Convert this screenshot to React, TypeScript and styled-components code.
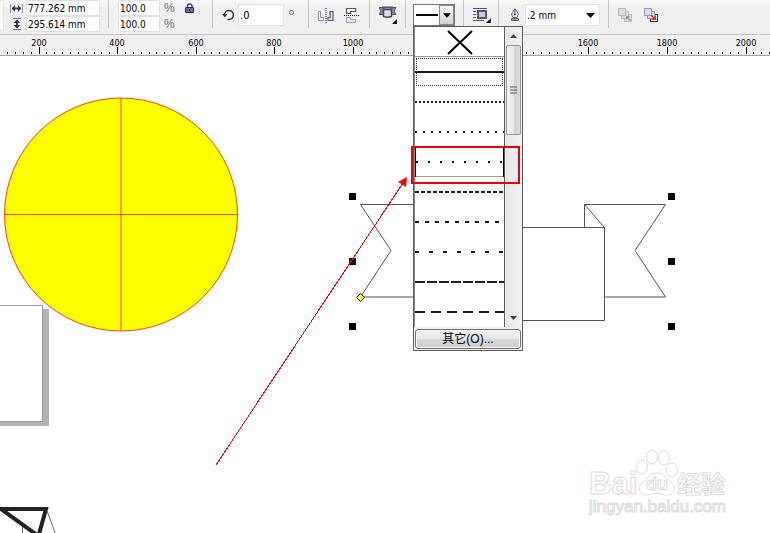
import React, { useEffect, useState } from 'react';
import styled, { createGlobalStyle } from 'styled-components';

const GlobalStyle = createGlobalStyle`
  * { box-sizing: border-box; }
  html, body { margin: 0; padding: 0; background: #fff; }
  body, button, input { font-family: "DejaVu Sans Condensed", "Noto Sans CJK SC", sans-serif; font-size: 10px; color: #000; }
  svg { display: block; flex: none; }
`;

const Page = styled.div`
  display: flex;
  flex-direction: column;
  height: 100vh;
  overflow: hidden;
`;

const Toolbar = styled.header`
  position: relative;
  z-index: 2;
  display: flex;
  height: 35px;
  flex: none;
  background: linear-gradient(#f8f8f8, #f0f0f0 8px);
  border-bottom: 1px solid #c4c4c4;
`;

const Section = styled.div<{ $width: number; $gap?: number; $start?: number }>`
  display: flex;
  align-items: center;
  flex: none;
  height: 30px;
  width: ${(p) => p.$width}px;
  gap: ${(p) => p.$gap ?? 0}px;
  padding-left: ${(p) => p.$start ?? 9}px;
`;

const Divider = styled.div`
  flex: none;
  width: 1px;
  height: 28px;
  background: #c3c3c3;
`;

const Pair = styled.div`
  display: grid;
  grid-template-rows: 16px 16px;
  align-self: flex-start;
`;

const PairRow = styled.label<{ $gap: number }>`
  display: flex;
  align-items: center;
  gap: ${(p) => p.$gap}px;
`;

const Field = styled.input<{ $width: number; $tall?: boolean }>`
  width: ${(p) => p.$width}px;
  height: ${(p) => (p.$tall ? 22 : 16)}px;
  padding: 0 1px;
  border: 1px solid #dde1e8;
  border-radius: 2px;
  background: #fff;
  outline: none;
  font-size: ${(p) => (p.$tall ? 11 : 10)}px;
`;

const FieldEdge = styled.div`
  width: 4px;
  height: 31px;
  align-self: flex-start;
  background: #fff;
  border: 1px solid #dde1e8;
  border-left: 0;
  border-radius: 0 2px 2px 0;
`;

const Unit = styled.span`
  font-family: "Liberation Sans", sans-serif;
  font-size: 12px;
  line-height: 16px;
  color: #66666e;
`;

const Degree = styled.span`
  width: 5px;
  height: 5px;
  margin: 0 0 6px 2px;
  border: 1px solid #77777f;
  border-radius: 50%;
`;

const IconButton = styled.button`
  display: flex;
  align-items: center;
  padding: 0;
  border: 0;
  background: none;
`;

const StylePicker = styled.div`
  position: relative;
  flex: none;
`;

const StyleButton = styled.button`
  display: flex;
  align-items: center;
  width: 42px;
  height: 22px;
  padding: 0 0 0 2px;
  border: 1px solid #777;
  background: #fff;
`;

const StylePreview = styled.span`
  flex: 1;
  height: 2px;
  margin-right: 1px;
  background: #000;
`;

const StyleCaret = styled.span`
  display: flex;
  align-items: center;
  justify-content: center;
  width: 15px;
  height: 20px;
  border: 1px solid #888;
  background: linear-gradient(#f6f6f6, #d4d4d4);
`;

const WidthPicker = styled.div`
  display: flex;
  align-items: center;
  width: 75px;
  height: 22px;
  padding-right: 4px;
  border: 1px solid #dde1e8;
  border-radius: 2px;
  background: #fff;
`;

const WidthInput = styled.input`
  flex: 1;
  min-width: 0;
  padding: 0 1px;
  border: 0;
  outline: none;
  background: none;
  font-size: 10px;
`;

const Menu = styled.div`
  position: absolute;
  top: 22px;
  left: 0;
  width: 110px;
  border: 1px solid #5c5c5c;
  background: #f0f0f0;
`;

const MenuBody = styled.div`
  display: flex;
`;

const StyleList = styled.div`
  flex: 1;
  border-left: 1px solid #8a8a8a;
  border-right: 1px solid #5c5c5c;
  background: #fff;
`;

const StyleRow = styled.button<{ $first?: boolean; $selected?: boolean; $hot?: boolean }>`
  position: relative;
  display: flex;
  align-items: center;
  justify-content: center;
  width: 100%;
  height: 30px;
  padding: 0;
  border: 0 solid #000;
  border-width: ${(p) => (p.$hot ? '0 1px' : '0')};
  box-shadow: ${(p) => (p.$first || p.$hot ? 'inset 0 -1px #999' : 'none')};
  outline: ${(p) => (p.$selected ? '1px dotted #333' : 'none')};
  outline-offset: -2px;
  background: #fff;
`;

const Highlight = styled.span`
  position: absolute;
  z-index: 1;
  top: -1px;
  left: -5px;
  width: 109px;
  height: 38px;
  border: 2px solid #f00000;
  pointer-events: none;
`;

const ScrollBar = styled.div`
  display: flex;
  flex-direction: column;
  align-items: center;
  width: 17px;
  background: linear-gradient(90deg, #e8e8e8, #f2f2f2);
`;

const ScrollArrow = styled.button`
  display: flex;
  align-items: center;
  justify-content: center;
  width: 16px;
  height: 18px;
  padding: 0;
  border: 0;
  background: none;
`;

const Thumb = styled.div`
  display: grid;
  place-items: center;
  width: 15px;
  height: 90px;
  margin-bottom: auto;
  border: 1px solid #979797;
  border-radius: 2px;
  background: linear-gradient(90deg, #f5f5f5, #e6e6e8 50%, #cfcfd2 60%, #dedee0);
`;

const OtherButton = styled.button`
  display: block;
  width: 106px;
  height: 20px;
  margin: 2px 1px 1px;
  padding: 0;
  border: 1px solid #707070;
  border-radius: 3px;
  box-shadow: inset 0 0 0 1px #f8f8f8;
  background: linear-gradient(#f2f2f2, #e6e6e6 50%, #d8d8d8 51%, #cfcfcf);
  font-family: "Liberation Sans", "Noto Sans CJK SC", sans-serif;
  font-size: 12px;
  line-height: 16px;
`;

const RulerBar = styled.div`
  flex: none;
  height: 21px;
  overflow: hidden;
  background: #f0f0f0;
  border-bottom: 1px solid #a0a0a0;
`;

const Canvas = styled.main`
  position: relative;
  flex: 1;
  min-height: 0;
  overflow: hidden;
  background: #fff;
`;

const Watermark = styled.div`
  position: absolute;
  right: 40px;
  bottom: 12px;
`;

const Caret = ({ size = 9 }: { size?: number }) => (
  <svg width={size} height="5" viewBox="0 0 9 5"><path d="M0 0h9L4.500 5z" fill="#000" /></svg>
);

const WidthIcon = () => (
  <svg width="13" height="9" viewBox="0 0 13 9" fill="none" stroke="#44445a">
    <path d="M.5 0v9M12.500 0v9" stroke="#8e8ea4" />
    <path d="M2 4.500h9" strokeWidth="2" />
    <path d="M5 1 2 4.500l3 3.500zM8 1l3 3.500-3 3.500z" fill="#33334a" stroke="none" />
  </svg>
);

const HeightIcon = () => (
  <svg width="13" height="12" viewBox="0 0 13 12" fill="none" stroke="#44445a">
    <path d="M3 .5h8M3 11.500h8" stroke="#77778a" />
    <path d="M7 2v8" strokeWidth="2" />
    <path d="M3.500 5 7 1.500 10.500 5zM3.500 7 7 10.500 10.500 7z" fill="#33334a" stroke="none" />
  </svg>
);

const LockIcon = () => (
  <svg width="10" height="11" viewBox="0 0 10 11">
    <path d="M2.500 5V2.500Q2.500 1 4.500 1T7 2.500V5" fill="none" stroke="#3b3b58" strokeWidth="1.400" />
    <rect x=".5" y="4.500" width="8" height="5" rx=".5" fill="#6e6ea6" stroke="#26264a" />
    <path d="M4.500 6v2" stroke="#15153a" />
  </svg>
);

const RotateIcon = () => (
  <svg width="13" height="12" viewBox="0 0 13 12">
    <path d="M2.500 6V5A4.500 4.500 0 1 1 7 10.500H5.500" fill="none" stroke="#33334a" strokeWidth="1.600" />
    <path d="M0 5h5.500L2.800 8.500z" fill="#33334a" />
  </svg>
);

const MirrorH = () => (
  <svg width="16" height="15" viewBox="0 0 16 15" fill="none">
    <path d="M.5 3.500h2v6h3v3h-5z" fill="#fff" stroke="#8a8aa2" />
    <path d="M15 3.500h-3v6h-2v3h5z" fill="#e4e4f2" stroke="#55556f" strokeWidth="1.200" />
    <path d="M8 0v15" stroke="#111" strokeDasharray="1 1" />
  </svg>
);

const MirrorV = () => (
  <svg width="15" height="15" viewBox="0 0 15 15" fill="none">
    <path d="M2.500.5h9v3h-5v2h-4z" fill="#fff" stroke="#55556f" strokeWidth="1.200" />
    <path d="M2.500 9.500h4v2h5v3h-9z" fill="#eee" stroke="#9a9ab4" />
    <path d="M0 7.500h15" stroke="#111" strokeDasharray="1 1" />
  </svg>
);

const RibbonIcon = () => (
  <svg width="18" height="18" viewBox="0 0 18 18">
    <path d="M0 1.500h5v7H0l2-3.500zM17 1.500h-5v7h5l-2-3.500z" fill="#8a8aa6" stroke="#55556f" />
    <path d="M4.500 3.500h8v7q-4 1.500-8 0z" fill="#dedeed" stroke="#44445a" strokeWidth="1.500" />
    <path d="M3 1.500h11" stroke="#55556f" strokeWidth="2" />
    <path d="M18 13v5h-5z" fill="#000" />
  </svg>
);

const WrapIcon = () => (
  <svg width="18" height="17" viewBox="0 0 18 17">
    <path d="M0 1.500h14M0 4.500h3M0 7.500h3M0 10.500h3M0 13.500h11" stroke="#55556a" />
    <rect x="5" y="4" width="8" height="7" fill="#c9c9df" stroke="#55556f" strokeWidth="2" />
    <path d="M18 11v5h-5z" fill="#000" />
  </svg>
);

const PenIcon = () => (
  <svg width="10" height="14" viewBox="0 0 10 14">
    <path d="M5 .7 1.500 6 3 9.500h4L8.500 6z" fill="#eee" stroke="#66667d" />
    <path d="M5 1v6" stroke="#55556a" />
    <circle cx="5" cy="6.500" r="1" fill="#44445a" />
    <path d="M1.500 10.500h7v2h-7z" fill="#aaaabd" stroke="#55556a" />
  </svg>
);

const OrderIcon = ({ active }: { active?: boolean }) => (
  <svg width="15" height="15" viewBox="0 0 15 15">
    <rect x="6.500" y="6.500" width="7" height="7" fill={active ? '#fff' : '#ddd'} stroke={active ? '#33334a' : '#bbb'} />
    <rect x="3.500" y="3.500" width="7" height="7" fill={active ? '#d8d8ee' : '#ddd'} stroke={active ? '#9999bb' : '#bbb'} />
    <rect x=".5" y=".5" width="7" height="7" fill={active ? '#dcdcf2' : '#dedede'} stroke={active ? '#9999bb' : '#b8b8b8'} />
    {active
      ? <path d="M7.500 6.500 10 9l2-2v5H7l2-2-2.500-2.500z" fill="#f03010" />
      : <path d="M8 8h4l-1.500 1.500L13 12l-1 1-2.500-2.500L8 12z" fill="#999" />}
  </svg>
);

const dashStyles = ['', '2 2', '2 6', '2 10', '4 2', '4 6', '4 10', '10 2', '10 6'];

const LineStyleMenu = () => (
  <Menu>
    <MenuBody>
      <StyleList role="listbox" aria-label="Line style">
        <StyleRow $first role="option" aria-selected={false} aria-label="None">
          <svg width="26" height="26" viewBox="0 0 26 26"><path d="M1 2l24 23M25 2 1 25" stroke="#000" strokeWidth="2" /></svg>
        </StyleRow>
        {dashStyles.map((dash, i) => (
          <StyleRow key={i} $selected={i === 0} $hot={i === 3} role="option" aria-selected={i === 0} aria-label={`Dash ${dash || 'solid'}`}>
            <svg width="100%" height="2"><path d="M0 1h400" stroke="#1a1a1a" strokeWidth="2" strokeDasharray={dash || undefined} /></svg>
            {i === 3 && <Highlight />}
          </StyleRow>
        ))}
      </StyleList>
      <ScrollBar>
        <ScrollArrow aria-label="Scroll up"><svg width="7" height="4"><path d="M0 4h7L3.500 0z" fill="#444" /></svg></ScrollArrow>
        <Thumb><svg width="7" height="9"><path d="M0 1h7M0 4h7M0 7h7" stroke="#555" /></svg></Thumb>
        <ScrollArrow aria-label="Scroll down"><svg width="7" height="4"><path d="M0 0h7L3.500 4z" fill="#444" /></svg></ScrollArrow>
      </ScrollBar>
    </MenuBody>
    <OtherButton>其它(O)...</OtherButton>
  </Menu>
);

const RULER_ORIGIN = -40;
const RULER_SCALE = 0.3928;
const LABEL_ROOM = 12;

function useWindowWidth() {
  const [width, setWidth] = useState(window.innerWidth);
  useEffect(() => {
    const update = () => setWidth(window.innerWidth);
    window.addEventListener('resize', update);
    return () => window.removeEventListener('resize', update);
  }, []);
  return width;
}

const Ruler = () => {
  const width = useWindowWidth();
  const count = Math.ceil((width - RULER_ORIGIN) / RULER_SCALE / 20);
  return (
    <RulerBar>
      <svg width="100%" height="20" shapeRendering="crispEdges">
        {Array.from({ length: count }, (_, i) => {
          const value = i * 20;
          const x = Math.round(RULER_ORIGIN + value * RULER_SCALE);
          const major = value % 200 === 0;
          return (
            <g key={value}>
              <path d={`M${x}.5 ${major ? 12 : 17}V19`} stroke="#000" />
              {major && x > LABEL_ROOM && x < width - LABEL_ROOM && (
                <text x={x} y="11" textAnchor="middle" fontSize="9">{value}</text>
              )}
            </g>
          );
        })}
      </svg>
    </RulerBar>
  );
};

const Artwork = () => (
  <svg width="100%" height="100%">
    <g transform="translate(0 -56)" fill="none">
      <path d="M0 309h49v117H0z" fill="#b3b3b3" />
      <path d="M-1 305.500h43.500v116H-1z" fill="#fff" stroke="#999" />
      <g stroke="#ff4500">
        <circle cx="121" cy="214.500" r="116.500" fill="#ff0" />
        <path d="M121 98v233M4 214.500h234" />
      </g>
      <path d="M0 509h46L39 534M1 509l36 26" stroke="#222" strokeWidth="4" />
      <path d="M47 511l9 24M22.500 527v8" stroke="#666" />
      <g stroke="#555">
        <path d="M430 204.500h-69.500l30.500 46-30.500 46.500H430" />
        <path d="M584.500 227v-22.500h81l-30.500 46 30.500 46.500h-61M584.500 204.500l20 23" />
        <path d="M430 227.500h174.500v93H430z" fill="#fff" />
      </g>
      {[349, 668].map((x) => [193, 258, 323].map((y) => (
        <rect key={`${x}-${y}`} x={x} y={y} width="7" height="7" fill="#000" />
      )))}
      <path d="M360.500 293.500l4 4-4 4-4-4z" fill="#ff0" stroke="#000" />
      <path d="M216 465 403 183" stroke="#f00" shapeRendering="crispEdges" />
      <path d="M407 177l-1 10-8-5z" fill="#f00" />
    </g>
  </svg>
);

const BaiduMark = () => (
  <Watermark>
    <svg width="142" height="74" viewBox="0 0 142 74" fill="#fff" stroke="#dcdcdc">
      <g fontFamily="Liberation Sans, sans-serif" fontWeight="700">
        <text x="1" y="47" fontSize="31">Bai</text>
        <text x="89" y="46" fontSize="24" fontFamily="Noto Sans CJK SC, sans-serif">经验</text>
        <ellipse cx="54" cy="20" rx="5.500" ry="7" />
        <ellipse cx="64" cy="10" rx="5.500" ry="7" />
        <ellipse cx="76" cy="11" rx="5.500" ry="7" />
        <ellipse cx="84" cy="23" rx="5.500" ry="7" />
        <path d="M69 28c-8 0-9 6-14 9-7 6-3 13 4 13 4 0 6-2 10-2s6 2 10 2c8 0 11-7 4-13-5-3-6-9-14-9z" transform="translate(0 -2)" />
        <text x="58" y="43" fontSize="18">du</text>
      </g>
      <text x="1" y="65" fontSize="17" fontFamily="Liberation Sans, sans-serif">jingyan.baidu.com</text>
    </svg>
  </Watermark>
);

export default function App() {
  return (
    <Page>
      <GlobalStyle />
      <Toolbar>
        <Section $width={108} $start={0} $gap={6}>
          <FieldEdge />
          <Pair>
            <PairRow $gap={3}><WidthIcon /><Field $width={74} defaultValue="777.262 mm" aria-label="Width" /></PairRow>
            <PairRow $gap={3}><HeightIcon /><Field $width={74} defaultValue="295.614 mm" aria-label="Height" /></PairRow>
          </Pair>
        </Section>
        <Divider />
        <Section $width={103} $gap={10}>
          <Pair>
            <PairRow $gap={4}><Field $width={42} defaultValue="100.0" aria-label="Horizontal scale" /><Unit>%</Unit></PairRow>
            <PairRow $gap={4}><Field $width={42} defaultValue="100.0" aria-label="Vertical scale" /><Unit>%</Unit></PairRow>
          </Pair>
          <Pair><IconButton aria-label="Lock ratio"><LockIcon /></IconButton></Pair>
        </Section>
        <Divider />
        <Section $width={95} $gap={3}>
          <RotateIcon />
          <Field $tall $width={46} defaultValue=".0" aria-label="Angle" />
          <Degree role="img" aria-label="degrees" />
        </Section>
        <Divider />
        <Section $width={60} $gap={10}>
          <IconButton aria-label="Mirror horizontally"><MirrorH /></IconButton>
          <IconButton aria-label="Mirror vertically"><MirrorV /></IconButton>
        </Section>
        <Divider />
        <Section $width={35}><IconButton aria-label="Banner shapes"><RibbonIcon /></IconButton></Section>
        <Divider />
        <Section $width={57} $start={7}>
          <StylePicker>
            <StyleButton aria-label="Line style" aria-expanded="true">
              <StylePreview />
              <StyleCaret><Caret size={8} /></StyleCaret>
            </StyleButton>
            <LineStyleMenu />
          </StylePicker>
        </Section>
        <Divider />
        <Section $width={34}><IconButton aria-label="Wrap text"><WrapIcon /></IconButton></Section>
        <Divider />
        <Section $width={109} $gap={5} $start={11}>
          <PenIcon />
          <WidthPicker>
            <WidthInput defaultValue=".2 mm" aria-label="Outline width" />
            <IconButton aria-label="Choose width"><Caret /></IconButton>
          </WidthPicker>
        </Section>
        <Divider />
        <Section $width={60} $gap={11}>
          <IconButton aria-label="To front" disabled><OrderIcon /></IconButton>
          <IconButton aria-label="To back"><OrderIcon active /></IconButton>
        </Section>
      </Toolbar>
      <Ruler />
      <Canvas>
        <Artwork />
        <BaiduMark />
      </Canvas>
    </Page>
  );
}
